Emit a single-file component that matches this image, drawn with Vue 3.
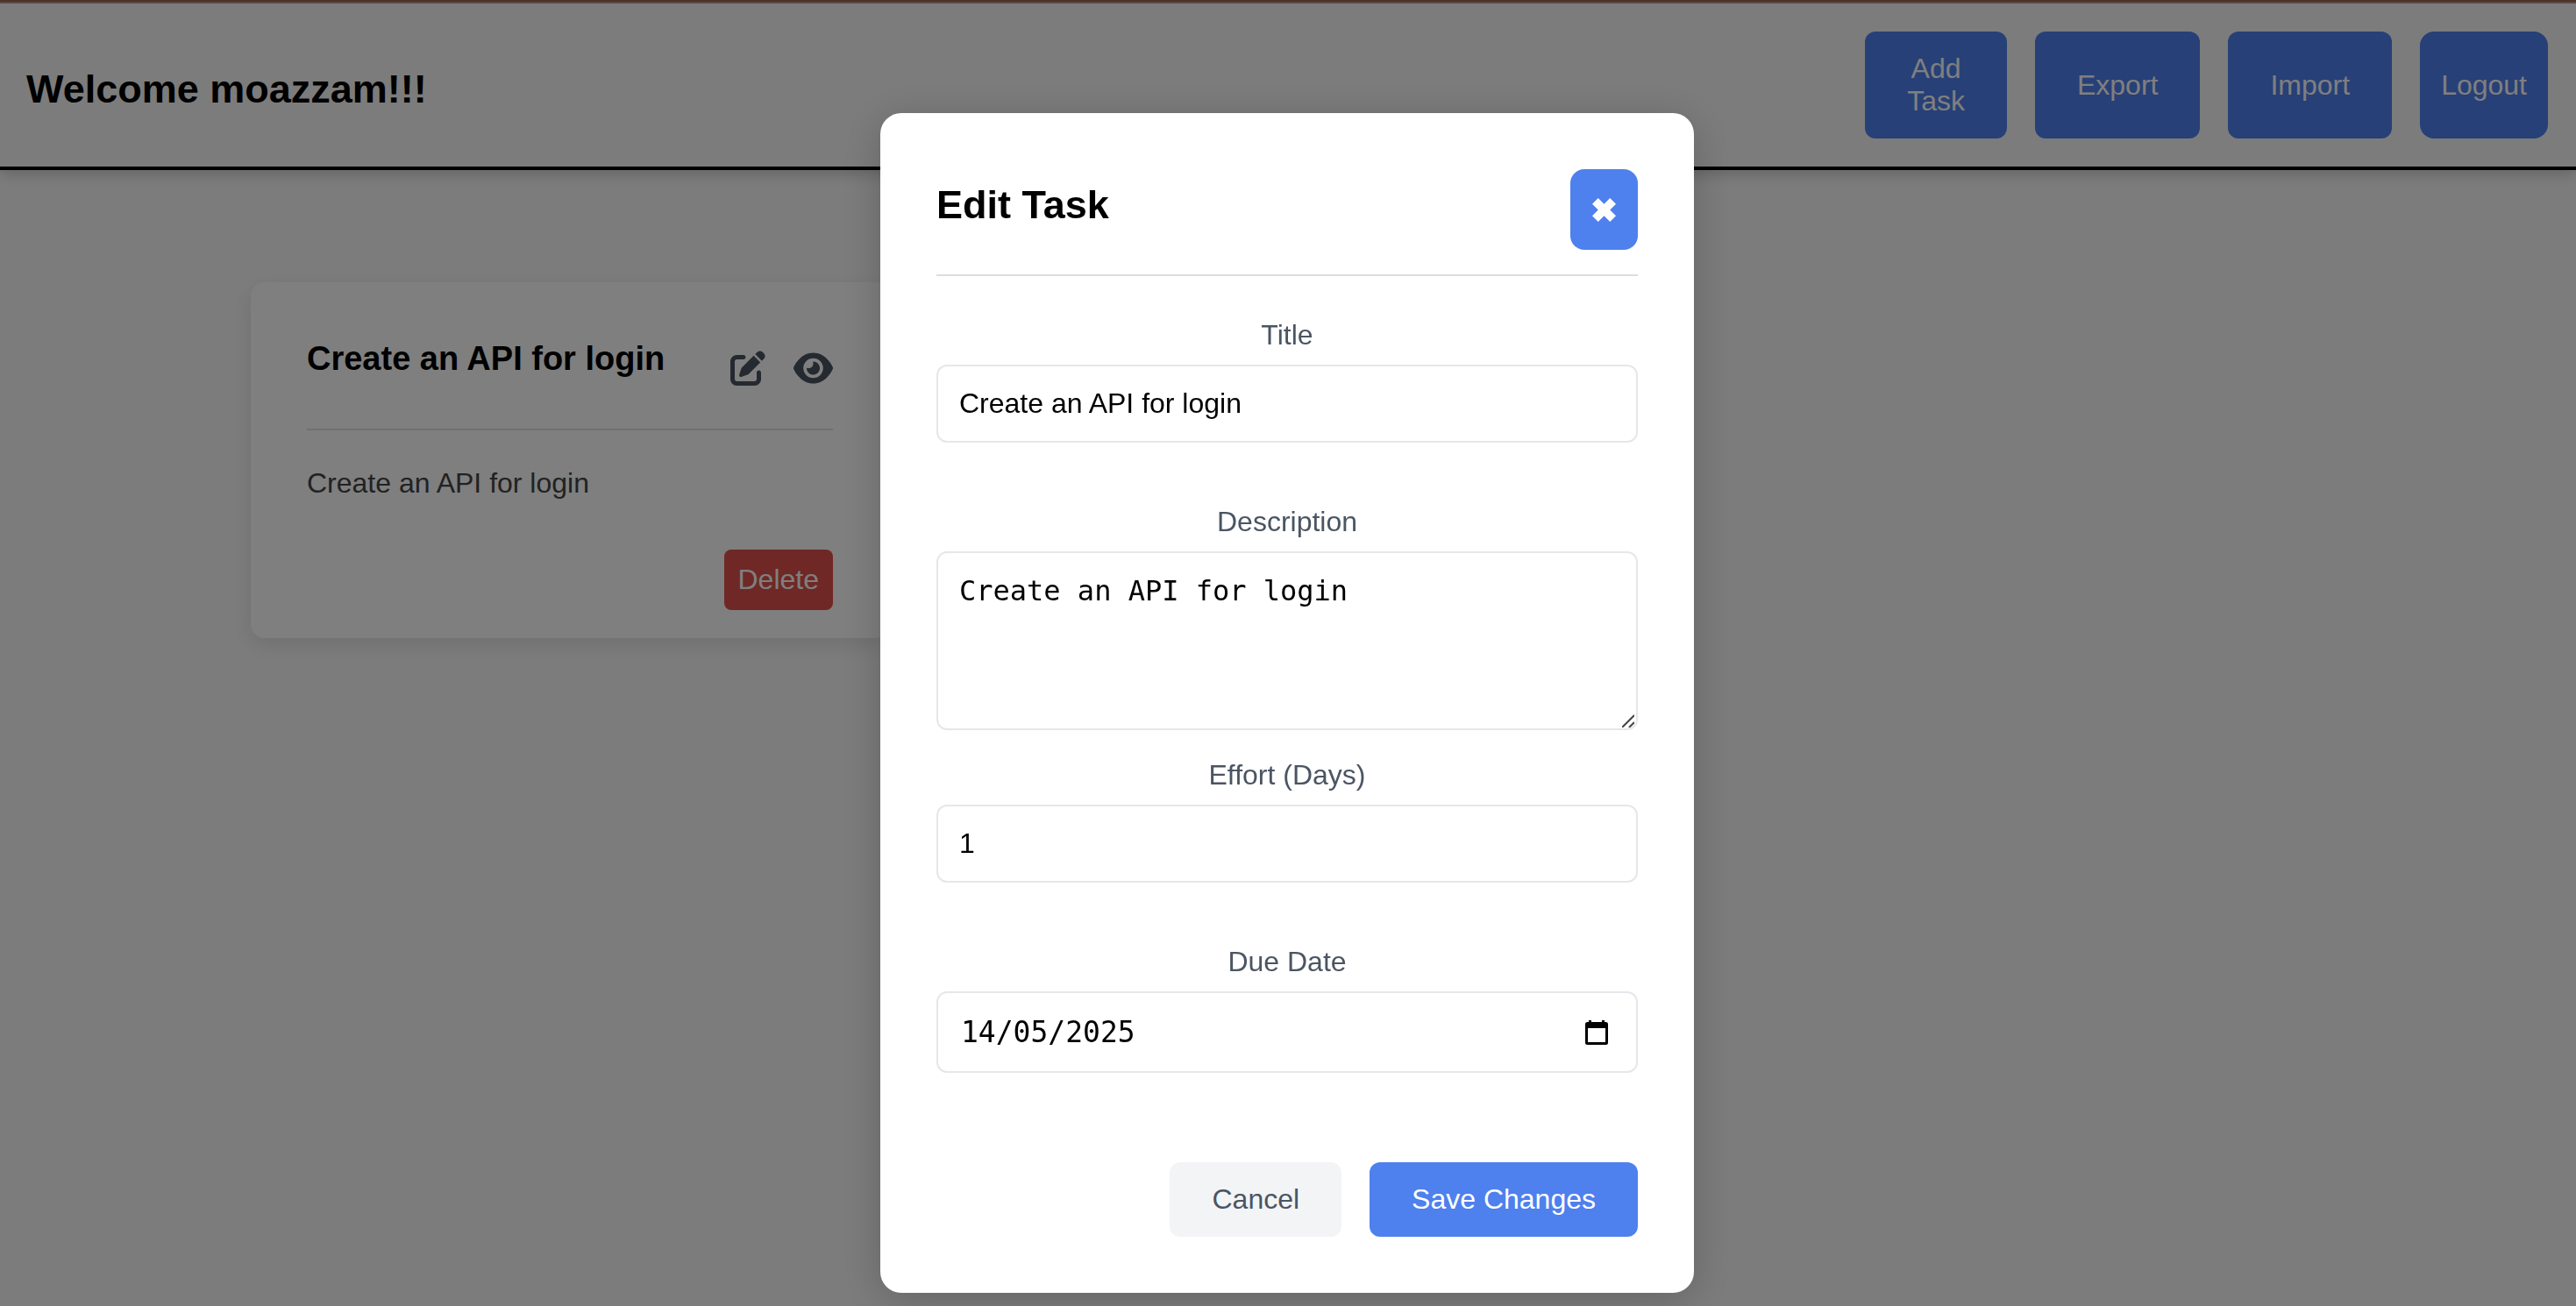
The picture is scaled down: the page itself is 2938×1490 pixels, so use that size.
<script setup>
import { reactive, ref } from 'vue'

const user = ref('moazzam')
const tasks = ref([
  { id: 1, title: 'Create an API for login', description: 'Create an API for login' },
])
const form = reactive({
  title: 'Create an API for login',
  description: 'Create an API for login',
  effort: 1,
  dueDate: '14/05/2025',
})
const modalOpen = ref(true)
</script>

<template>
  <div class="page">
    <header class="topbar">
      <h1 class="welcome">Welcome {{ user }}!!!</h1>
      <nav class="nav">
        <button type="button" class="btn primary">Add Task</button>
        <button type="button" class="btn primary">Export</button>
        <button type="button" class="btn primary">Import</button>
        <button type="button" class="btn primary logout">Logout</button>
      </nav>
    </header>

    <main class="board">
      <article v-for="task in tasks" :key="task.id" class="card">
        <div class="card-head">
          <h2 class="card-title">{{ task.title }}</h2>
          <div class="card-icons">
            <button type="button" class="icon-btn" aria-label="Edit task" @click="modalOpen = true">
              <svg width="40" height="40" viewBox="0 0 512 512" fill="currentColor"><path d="M471.6 21.7c-21.9-21.9-57.3-21.9-79.2 0L362.3 51.7l97.9 97.9 30.1-30.1c21.9-21.9 21.9-57.3 0-79.2L471.6 21.7zm-299.2 220c-6.1 6.1-10.8 13.6-13.5 21.9l-29.6 88.8c-2.9 8.6-.6 18.1 5.8 24.6s15.9 8.7 24.6 5.8l88.8-29.6c8.2-2.7 15.7-7.4 21.9-13.5L437.7 172.3 339.7 74.3 172.4 241.7zM96 64C43 64 0 107 0 160V416c0 53 43 96 96 96H352c53 0 96-43 96-96V320c0-17.7-14.3-32-32-32s-32 14.3-32 32v96c0 17.7-14.3 32-32 32H96c-17.7 0-32-14.3-32-32V160c0-17.7 14.3-32 32-32h96c17.7 0 32-14.3 32-32s-14.3-32-32-32H96z" /></svg>
            </button>
            <button type="button" class="icon-btn" aria-label="View task">
              <svg width="45" height="40" viewBox="0 0 576 512" fill="currentColor"><path d="M288 32c-80.8 0-145.5 36.8-192.6 80.6C48.6 156 17.3 208 2.5 243.7c-3.3 7.9-3.3 16.7 0 24.6C17.3 304 48.6 356 95.4 399.4C142.5 443.2 207.2 480 288 480s145.5-36.8 192.6-80.6c46.8-43.5 78.1-95.4 93-131.1c3.3-7.9 3.3-16.7 0-24.6c-14.9-35.7-46.2-87.7-93-131.1C433.5 68.8 368.8 32 288 32zM144 256a144 144 0 1 1 288 0 144 144 0 1 1 -288 0zm144-64c0 35.3-28.7 64-64 64c-7.1 0-13.9-1.2-20.3-3.3c-5.5-1.8-11.9 1.6-11.7 7.4c.3 6.9 1.3 13.8 3.2 20.7c13.7 51.2 66.4 81.6 117.6 67.9s81.6-66.4 67.9-117.6c-11.1-41.5-47.8-69.4-88.6-71.1c-5.8-.2-9.2 6.1-7.4 11.7c2.1 6.4 3.3 13.2 3.3 20.3z" /></svg>
            </button>
          </div>
        </div>
        <p class="card-text">{{ task.description }}</p>
        <div class="card-foot">
          <button type="button" class="btn danger">Delete</button>
        </div>
      </article>
    </main>

    <div v-if="modalOpen" class="overlay">
      <form class="modal" role="dialog" aria-labelledby="modal-title" @submit.prevent="modalOpen = false">
        <div class="modal-head">
          <h2 id="modal-title" class="modal-title">Edit Task</h2>
          <button type="button" class="btn primary close" aria-label="Close" @click="modalOpen = false">
            <svg width="27" height="27" viewBox="-40 -40 80 80" fill="currentColor"><path d="M-20-40 0-20 20-40 40-20 20 0 40 20 20 40 0 20-20 40-40 20-20 0-40-20Z" /></svg>
          </button>
        </div>

        <div class="field">
          <label for="title">Title</label>
          <input id="title" v-model="form.title" class="control" type="text" />
        </div>
        <div class="field compact">
          <label for="description">Description</label>
          <div class="area-wrap">
            <textarea id="description" v-model="form.description" class="control area"></textarea>
            <svg class="grip" width="14" height="15" viewBox="0 0 14 15" fill="none" stroke="#444" stroke-width="2"><path d="M0 15 14 1M8 15 14 9" /></svg>
          </div>
        </div>
        <div class="field">
          <label for="effort">Effort (Days)</label>
          <input id="effort" v-model="form.effort" class="control" type="number" />
        </div>
        <div class="field">
          <label for="due">Due Date</label>
          <div class="control date">
            <input id="due" v-model="form.dueDate" class="date-input" type="text" />
            <button type="button" class="icon-btn calendar" aria-label="Choose date">
              <svg width="26" height="28" viewBox="0 0 26 28"><path fill="#000" fill-rule="evenodd" d="M4 0h3v2h12V0h3v2h1.500A2.500 2.500 0 0 1 26 4.500v21a2.500 2.500 0 0 1-2.500 2.500h-21A2.500 2.500 0 0 1 0 25.500v-21A2.500 2.500 0 0 1 2.500 2H4zM3 9v16h20V9z" /></svg>
            </button>
          </div>
        </div>

        <div class="modal-foot">
          <button type="button" class="btn secondary" @click="modalOpen = false">Cancel</button>
          <button type="submit" class="btn primary">Save Changes</button>
        </div>
      </form>
    </div>
  </div>
</template>

<style>
body {
  margin: 0;
  background: #f9f9f9;
}
</style>

<style scoped>
* {
  box-sizing: border-box;
}

.page {
  min-height: 100vh;
  border-top: 2px solid #9e6c5a;
  background: #f9f9f9;
  color: #000;
  font-family: "Liberation Sans", Arial, Helvetica, sans-serif;
  font-size: 32px;
  line-height: 37px;
}

h1,
h2,
p {
  margin: 0;
}

.topbar {
  display: flex;
  align-items: center;
  justify-content: space-between;
  padding: 32px 32px 32px 30px;
  border-top: 2px solid #b4948a;
  border-bottom: 4px solid #000;
  box-shadow: 0 4px 16px rgba(0, 0, 0, 0.2);
}

.welcome {
  padding-top: 10px;
  font-size: 45px;
  line-height: 52px;
}

.nav {
  display: flex;
  gap: 32px;
}

.btn {
  padding: 24px 48px;
  border: 0;
  border-radius: 12px;
  font: inherit;
  cursor: pointer;
}

.nav .btn {
  width: min-content;
}

.primary {
  background: #4e80ee;
  color: #fff;
}

.nav .logout {
  padding: 24px;
  border-radius: 16px;
}

.secondary {
  background: #f3f4f6;
  color: #4b5563;
}

.danger {
  padding: 16px;
  border-radius: 8px;
  background: #de504c;
  color: #fff;
}

.board {
  display: grid;
  grid-template-columns: repeat(auto-fill, 728px);
  gap: 64px;
  max-width: 2366px;
  margin: 0 auto;
  padding: 128px 0;
}

.card {
  padding: 64px 64px 32px;
  border-radius: 16px;
  background: #fff;
  box-shadow: 0 8px 24px rgba(0, 0, 0, 0.1);
}

.card-head {
  display: flex;
  align-items: flex-start;
  justify-content: space-between;
  padding-bottom: 49px;
  border-bottom: 2px solid #e0e0e0;
}

.card-title {
  font-size: 38px;
  line-height: 46px;
}

.card-icons {
  display: flex;
  gap: 32px;
  padding-top: 14px;
}

.icon-btn {
  display: flex;
  padding: 0;
  border: 0;
  background: none;
  color: #4b5563;
  cursor: pointer;
}

.card-text {
  margin: 42px 0 57px;
  color: #444;
}

.card-foot {
  display: flex;
  justify-content: flex-end;
}

.overlay {
  position: fixed;
  inset: 0;
  display: flex;
  align-items: flex-start;
  justify-content: center;
  padding: 129px 2px 0 0;
  background: rgba(0, 0, 0, 0.5);
}

.modal {
  width: 100%;
  max-width: 928px;
  padding: 64px;
  border-radius: 24px;
  background: #fff;
  box-shadow: 0 8px 48px rgba(0, 0, 0, 0.2);
}

.modal-head {
  display: flex;
  align-items: flex-start;
  justify-content: space-between;
  margin-bottom: 48px;
  padding-bottom: 28px;
  border-bottom: 2px solid #ddd;
}

.modal-title {
  font-size: 45px;
  line-height: 82px;
}

.close {
  display: flex;
  align-items: center;
  height: 92px;
  padding: 0 25px;
  border-radius: 16px;
}

.field {
  display: flex;
  flex-direction: column;
  gap: 15px;
  margin-bottom: 71px;
}

.compact {
  margin-bottom: 32px;
}

label {
  color: #4b5563;
  line-height: 38px;
  text-align: center;
}

.control {
  width: 100%;
  padding: 24px;
  border: 2px solid #e5e7eb;
  border-radius: 12px;
  background: #fff;
  color: #000;
  font: inherit;
  outline: none;
}

.area-wrap {
  position: relative;
  display: flex;
}

.area {
  height: 204px;
  font-family: "DejaVu Sans Mono", monospace;
  line-height: 38px;
  resize: none;
}

.grip {
  position: absolute;
  right: 4px;
  bottom: 3px;
}

.date {
  display: flex;
  align-items: center;
  justify-content: space-between;
  height: 93px;
  padding-right: 32px;
}

.date-input {
  flex: 1;
  min-width: 0;
  padding: 0 2px;
  border: 0;
  background: none;
  color: #000;
  font-family: "DejaVu Sans Mono", monospace;
  font-size: 33px;
  line-height: 37px;
  outline: none;
}

.modal-foot {
  display: flex;
  justify-content: flex-end;
  gap: 32px;
  margin-top: 102px;
}
</style>
